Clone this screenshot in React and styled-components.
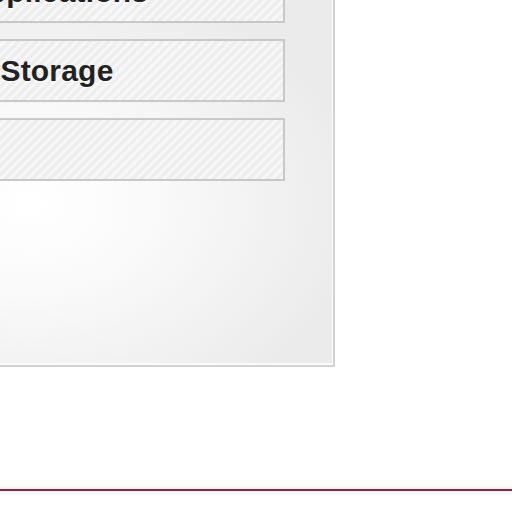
import React from "react";
import styled, { createGlobalStyle } from "styled-components";

const GlobalStyle = createGlobalStyle`
  html, body {
    margin: 0;
    padding: 0;
    background: #ffffff;
    overflow: hidden;
  }
  body {
    font-family: "Liberation Sans", Arial, sans-serif;
  }
`;

const Page = styled.div`
  width: 512px;
  height: 512px;
  display: flex;
  flex-direction: column;
  overflow: hidden;
`;

const Panel = styled.div`
  box-sizing: border-box;
  width: 556px;
  height: 427px;
  margin: -60px 0 0 -221px;
  padding: 18px 48px 0;
  display: flex;
  flex-direction: column;
  gap: 16px;
  border: 2px solid #d2d2d2;
  box-shadow: inset -1px -2px 0 #fbfbfb;
  background: radial-gradient(
    ellipse 60% 55% at 45% 62%,
    #ffffff 0%,
    #fafafa 35%,
    #ebebeb 100%
  );
`;

const Item = styled.div`
  box-sizing: border-box;
  height: 63px;
  flex-shrink: 0;
  display: flex;
  align-items: center;
  justify-content: center;
  border: 2px solid #c8c8c8;
  background: repeating-linear-gradient(
    135deg,
    #f7f7f7 0 3px,
    #eeeeee 3px 6.4px
  );
  font-size: 30px;
  font-weight: 700;
  letter-spacing: 0.2px;
  color: #222222;
  text-shadow: 0 1px 0 #ffffff;
`;

const Footer = styled.div`
  margin-top: 113px;
  border-top: 1px solid #fdfdee;
`;

const Rule = styled.div`
  margin-top: 6px;
  height: 2px;
  border-top: 2px solid #f3f7fd;
  border-bottom: 4px solid #f5f8fd;
  background: #a81a2c;
`;

const items = ["Applications", "Storage", ""];

const App = () => (
  <Page>
    <GlobalStyle />
    <Panel>
      {items.map((label, i) => (
        <Item key={i}>{label}</Item>
      ))}
    </Panel>
    <Footer>
      <Rule />
    </Footer>
  </Page>
);

export default App;
